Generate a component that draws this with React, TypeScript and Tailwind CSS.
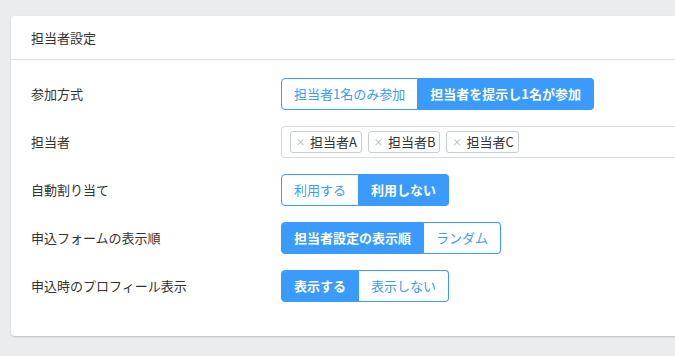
import React from "react";

type Opt = { label: string; active: boolean };

function Group({ options }: { options: Opt[] }) {
  return (
    <div className="flex h-[32px]">
      {options.map((o, i) => (
        <div
          key={i}
          className={
            "flex items-center px-[12px] border border-[#3a9bfc] text-[13px] " +
            (i === 0 ? "rounded-l-[4px] " : "") +
            (i === options.length - 1 ? "rounded-r-[4px] " : "") +
            (i > 0 ? "border-l-0 " : "") +
            (o.active
              ? "bg-[#3a9bfc] text-white font-semibold"
              : "bg-white text-[#3a9bfc]")
          }
        >
          {o.label}
        </div>
      ))}
    </div>
  );
}

function Tag({ label }: { label: string }) {
  return (
    <div className="flex items-center h-[22px] pl-[6px] pr-[4px] border border-[#c8ccd4] rounded-[3px] text-[13px] text-[#333]">
      <span className="inline-flex justify-center w-[7px] overflow-visible text-[#b0b4bc] text-[10px] mr-[6px] leading-none">×</span>
      {label}
    </div>
  );
}

function Row({ label, children }: { label: string; children: React.ReactNode }) {
  return (
    <div className="flex items-center h-[32px]">
      <div className="w-[250px] shrink-0 text-[13px] text-[#333]">{label}</div>
      {children}
    </div>
  );
}

export default function App() {
  return (
    <div
      className="w-[675px] h-[356px] bg-[#ebecee] overflow-hidden pt-[16px] pl-[11px]"
      style={{ fontFamily: '"Noto Sans CJK JP", "Noto Sans", sans-serif' }}
    >
      <div className="w-[700px] bg-white rounded-[4px] shadow-[0_1px_2px_rgba(0,0,0,0.2)]">
        <div className="h-[44px] flex items-center px-[20px] border-b border-[#dcdfe3] text-[13px] text-[#333]">
          担当者設定
        </div>
        <div className="flex flex-col gap-[16px] pt-[18px] pb-[34px] px-[20px]">
          <Row label="参加方式">
            <Group
              options={[
                { label: "担当者1名のみ参加", active: false },
                { label: "担当者を提示し1名が参加", active: true },
              ]}
            />
          </Row>
          <Row label="担当者">
            <div className="flex items-center gap-[6px] h-[32px] w-[410px] shrink-0 border border-[#d6d9df] rounded-[4px] pl-[8px]">
              <Tag label="担当者A" />
              <Tag label="担当者B" />
              <Tag label="担当者C" />
            </div>
          </Row>
          <Row label="自動割り当て">
            <Group
              options={[
                { label: "利用する", active: false },
                { label: "利用しない", active: true },
              ]}
            />
          </Row>
          <Row label="申込フォームの表示順">
            <Group
              options={[
                { label: "担当者設定の表示順", active: true },
                { label: "ランダム", active: false },
              ]}
            />
          </Row>
          <Row label="申込時のプロフィール表示">
            <Group
              options={[
                { label: "表示する", active: true },
                { label: "表示しない", active: false },
              ]}
            />
          </Row>
        </div>
      </div>
    </div>
  );
}
